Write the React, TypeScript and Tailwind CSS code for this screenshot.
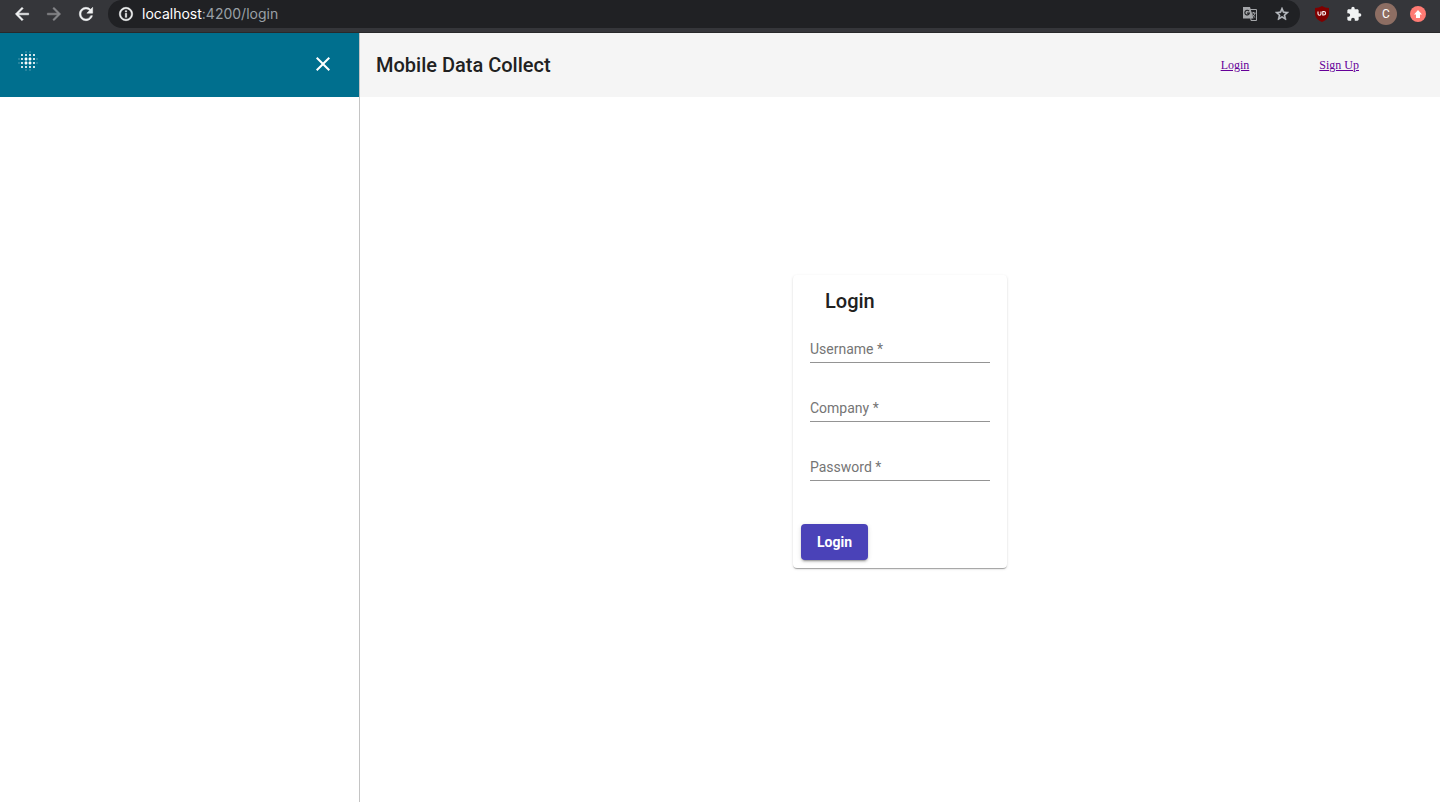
import React from "react";
import { MdArrowBack, MdArrowForward, MdBlurOn, MdClose, MdExtension, MdInfoOutline, MdRefresh, MdStarBorder } from "react-icons/md";

function TranslateIcon() {
  return (
    <svg viewBox="0 0 16 16" className="size-4" fill="none">
      <path d="M8 3.500h6.500v11H9z" stroke="#a4a6a9" strokeWidth="1" />
      <path d="M1 1h7l3.500 11.500H1z" fill="#a4a6a9" />
      <path d="M7 5.200a2.300 2.300 0 1 0 .4 1.900H5" stroke="#202124" strokeWidth="1.100" />
      <path d="M9.500 7h4M11.500 6v1M13 7c-.3 1.700-1.500 3-2.500 3.800M10.500 8.500c.5 1.200 1.500 2.200 2.700 3" stroke="#a4a6a9" strokeWidth="1" />
    </svg>
  );
}

function ShieldIcon() {
  return (
    <svg viewBox="0 0 16 16" className="size-4">
      <path d="M8 0c2 1.300 4.300 2 7 2v5c0 4.500-2.500 7-7 9-4.500-2-7-4.500-7-9V2c2.700 0 5-.7 7-2z" fill="#800000" />
      <path d="M4 5.500v2.200a1.300 1.300 0 0 0 3 0V5.500M8.800 5.500v3.500h1a1.700 1.700 0 0 0 0-3.500z" fill="none" stroke="#fff" strokeWidth="1.100" />
    </svg>
  );
}

function UpdateIcon() {
  return (
    <svg viewBox="0 0 16 16" className="size-4">
      <circle cx="8" cy="8" r="8" fill="#ff7b74" />
      <path d="M8 4l4 4.500h-2V12H6V8.500H4z" fill="#fff" />
    </svg>
  );
}

function BrowserBar() {
  return (
    <div className="flex h-[33px] items-start border-b border-[#28292b] bg-[#35363a] font-[Inter,sans-serif] text-[#f1f3f4]">
      <div className="flex h-7 w-27 shrink-0 items-center gap-3 pl-3">
        <button type="button" aria-label="Back"><MdArrowBack size={20} strokeWidth={0.6} className="[&>path[fill=none]]:stroke-none" /></button>
        <button type="button" aria-label="Forward" className="text-[#86878a]"><MdArrowForward size={20} strokeWidth={0.6} className="[&>path[fill=none]]:stroke-none" /></button>
        <button type="button" aria-label="Reload"><MdRefresh size={20} strokeWidth={0.6} className="[&>path[fill=none]]:stroke-none" /></button>
      </div>
      <div className="flex h-7 grow items-center rounded-full bg-[#202124] px-2.5">
        <MdInfoOutline size={16} strokeWidth={0.8} className="[&>path[fill=none]]:stroke-none" />
        <div className="ml-2 grow text-sm leading-5 text-[#9aa0a6]">
          <span className="text-white">localhost</span>:4200/login
        </div>
        <div className="flex items-center gap-4">
          <button type="button" aria-label="Translate"><TranslateIcon /></button>
          <button type="button" aria-label="Bookmark" className="text-[#bdc1c6]"><MdStarBorder size={16} strokeWidth={0.8} className="[&>path[fill=none]]:stroke-none" /></button>
        </div>
      </div>
      <div className="flex h-7 shrink-0 items-center px-3.5">
        <button type="button" aria-label="Content blocker"><ShieldIcon /></button>
        <button type="button" aria-label="Extensions" className="ml-4"><MdExtension size={16} /></button>
        <button type="button" aria-label="Profile" className="mx-[13px] flex size-[22px] items-center justify-center rounded-full bg-[#8d6e63] font-[Roboto,sans-serif] text-xs text-white">C</button>
        <button type="button" aria-label="Update"><UpdateIcon /></button>
      </div>
    </div>
  );
}

function Field({ id, label, type = "text" }: { id: string; label: string; type?: string }) {
  return (
    <div className="h-[59px]">
      <div className="grid h-6 items-start border-b border-[#949494]">
        <input id={id} type={type} required placeholder=" " className="peer col-start-1 row-start-1 h-5 w-full min-w-0 bg-transparent text-sm outline-none" />
        <label htmlFor={id} className="pointer-events-none invisible col-start-1 row-start-1 text-sm leading-5 text-[#757575] peer-placeholder-shown:visible">
          {label} *
        </label>
      </div>
    </div>
  );
}

export default function App() {
  return (
    <div className="flex min-h-screen flex-col bg-white font-[Roboto,sans-serif] text-[#212121]">
      <BrowserBar />
      <div className="flex grow">
        <aside className="w-1/4 border-r border-[#c4c4c4]">
          <div className="flex h-16 items-center justify-between bg-[#006f8e] pr-6 pl-4 text-white">
            <MdBlurOn size={24} className="mb-2" />
            <button type="button" aria-label="Close menu" className="mb-0.5"><MdClose size={24} /></button>
          </div>
        </aside>
        <div className="flex grow flex-col">
          <header className="flex h-16 items-center justify-between bg-[#f5f5f5] pr-[81px] pl-4">
            <h1 className="text-xl leading-8 font-medium">Mobile Data Collect</h1>
            <nav className="flex gap-[70px] font-['Liberation_Serif',serif] text-xs text-[#660099]">
              <a href="#login" className="underline">Login</a>
              <a href="#signup" className="underline">Sign Up</a>
            </nav>
          </header>
          <main className="flex grow items-center justify-center pb-14">
            <form className="w-[214px] rounded bg-white px-2 pb-2 shadow-[0_2px_1px_-1px_rgba(0,0,0,0.2),0_1px_1px_0_rgba(0,0,0,0.14),0_1px_3px_0_rgba(0,0,0,0.12)]">
              <h2 className="px-6 pt-2.5 text-xl leading-8 font-medium">Login</h2>
              <div className="px-[9px] pt-[22px]">
                <Field id="username" label="Username" />
                <Field id="company" label="Company" />
                <Field id="password" label="Password" type="password" />
              </div>
              <button type="submit" className="mt-2 h-9 rounded bg-[#4a42b8] px-4 text-sm font-bold text-white shadow-[0_3px_1px_-2px_rgba(0,0,0,0.2),0_2px_2px_0_rgba(0,0,0,0.14),0_1px_5px_0_rgba(0,0,0,0.12)]">
                Login
              </button>
            </form>
          </main>
        </div>
      </div>
    </div>
  );
}
